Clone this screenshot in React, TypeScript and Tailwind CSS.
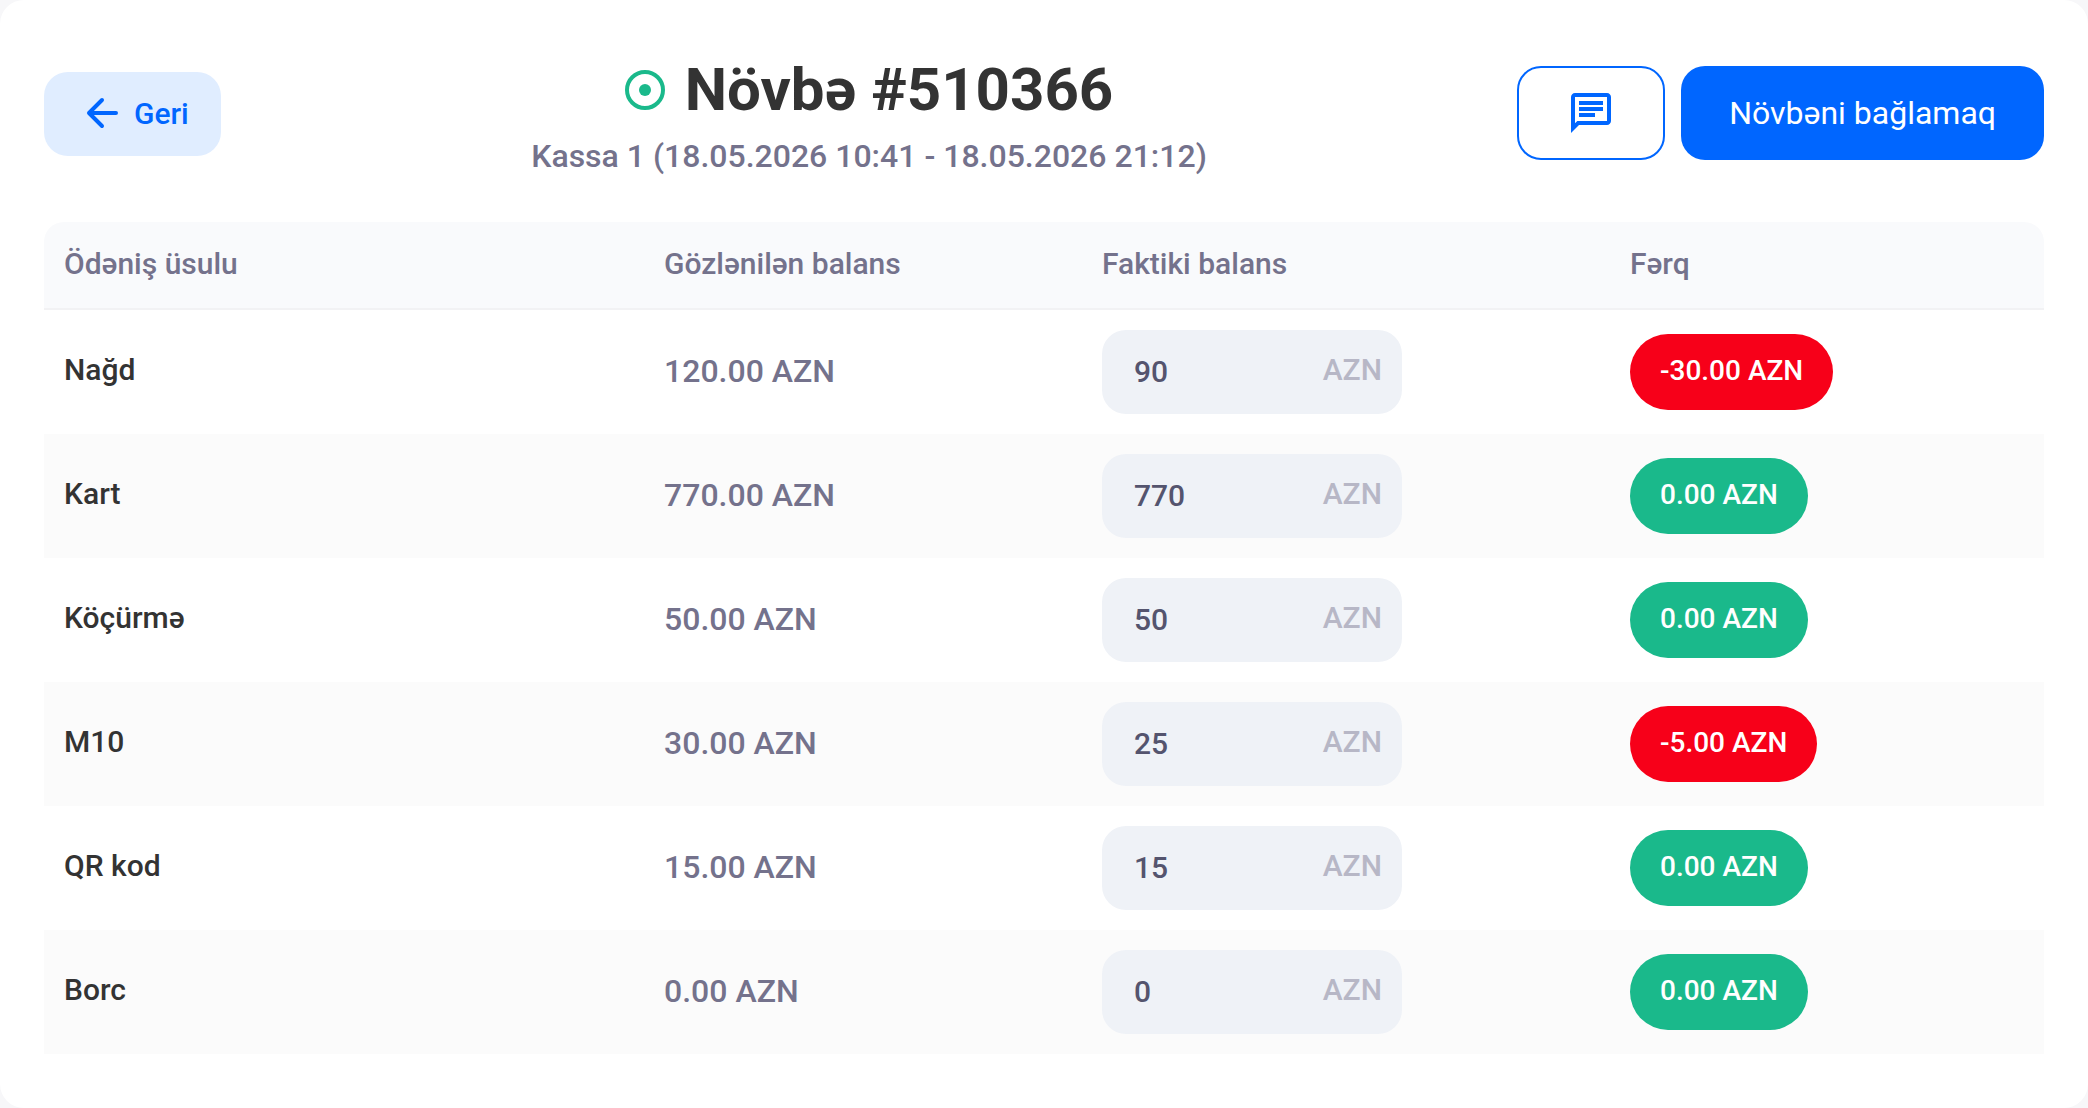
import { useState } from "react";
import { MdOutlineChat } from "react-icons/md";

interface Payment {
  id: string;
  name: string;
  expected: number;
  actual: string;
}

const initialPayments: Payment[] = [
  { id: "cash", name: "Nağd", expected: 120, actual: "90" },
  { id: "card", name: "Kart", expected: 770, actual: "770" },
  { id: "transfer", name: "Köçürmə", expected: 50, actual: "50" },
  { id: "m10", name: "M10", expected: 30, actual: "25" },
  { id: "qr", name: "QR kod", expected: 15, actual: "15" },
  { id: "debt", name: "Borc", expected: 0, actual: "0" },
];

function BackIcon() {
  return (
    <svg
      className="size-8"
      viewBox="0 0 32 32"
      fill="none"
      stroke="currentColor"
      strokeWidth="4"
      strokeLinecap="round"
      strokeLinejoin="round"
      aria-hidden="true"
    >
      <path d="M30 16H3M16 3L3 16l13 13" />
    </svg>
  );
}

function StatusIcon() {
  return (
    <svg className="size-10 text-[#1ab98b]" viewBox="0 0 40 40" aria-hidden="true">
      <circle cx="20" cy="20" r="18" fill="none" stroke="currentColor" strokeWidth="4" />
      <circle cx="20" cy="20" r="6" fill="currentColor" />
    </svg>
  );
}

function DiffBadge({ value }: { value: number }) {
  return (
    <span
      className={`inline-block align-middle rounded-full px-[30px] pt-4 pb-[18px] text-[28px] leading-[42px] text-white whitespace-nowrap ${
        value < 0 ? "bg-[#f70019]" : "bg-[#1ab98b]"
      }`}
    >
      {value.toFixed(2)} AZN
    </span>
  );
}

export default function App() {
  const [payments, setPayments] = useState<Payment[]>(initialPayments);

  const handleChange = (id: string, actual: string) => {
    setPayments(payments.map((p) => (p.id === id ? { ...p, actual } : p)));
  };

  return (
    <div className="min-h-screen flex bg-[#f7f7f9] font-['Roboto',sans-serif] font-medium">
      <main className="flex-1 bg-white rounded-3xl px-11 pt-13 pb-13">
        <header className="flex items-center justify-between">
          <button
            type="button"
            className="flex items-center gap-4 h-21 pl-[42px] pr-8 pb-0.5 rounded-3xl bg-[#e0edff] text-[#0066ff] text-[30px]"
          >
            <BackIcon />
            Geri
          </button>

          <div className="flex flex-col items-center gap-2">
            <h1 className="flex items-center gap-5 text-[60px] leading-[76px] font-bold text-[#333333]">
              <StatusIcon />
              Növbə #510366
            </h1>
            <p className="text-[32px] leading-10 text-[#74728c]">
              Kassa 1 (18.05.2026 10:41 - 18.05.2026 21:12)
            </p>
          </div>

          <div className="flex gap-4 pb-0.5">
            <button
              type="button"
              aria-label="Şərh"
              className="flex items-center justify-center w-37 h-[94px] rounded-3xl border-2 border-[#0066ff] text-[#0066ff]"
            >
              <MdOutlineChat className="size-12" />
            </button>
            <button
              type="button"
              className="h-[94px] px-12 rounded-3xl bg-[#0066ff] text-white text-[32px] font-normal"
            >
              Növbəni bağlamaq
            </button>
          </div>
        </header>

        <table className="w-full mt-[46px] table-fixed border-separate border-spacing-0 text-left">
          <thead>
            <tr className="text-[30px] leading-[44px] text-[#74728c] *:bg-[#f9fafc] *:border-b-2 *:border-[#f2f2f4] *:px-5 *:pt-5 *:pb-[22px] *:font-medium">
              <th className="w-[30%] rounded-tl-[20px]">Ödəniş üsulu</th>
              <th className="w-[21.9%]">Gözlənilən balans</th>
              <th className="w-[26.4%]">Faktiki balans</th>
              <th className="rounded-tr-[20px]">Fərq</th>
            </tr>
          </thead>
          <tbody>
            {payments.map((p) => (
              <tr key={p.id} className="h-31 even:bg-[#fbfbfb]">
                <td className="px-5 pb-1.5 text-[30px] text-[#333333]">
                  <label htmlFor={p.id}>{p.name}</label>
                </td>
                <td className="px-5 pb-0.5 text-[32px] text-[#74728c]">
                  {p.expected.toFixed(2)} AZN
                </td>
                <td className="px-5">
                  <div className="flex items-center w-75 h-21 px-5 rounded-3xl bg-[#eff2f7] text-[30px]">
                    <input
                      id={p.id}
                      value={p.actual}
                      onChange={(e) => handleChange(p.id, e.target.value)}
                      inputMode="decimal"
                      className="flex-1 min-w-0 px-3 pb-0.5 text-[#54546e] outline-none"
                    />
                    <span className="pb-1.5 text-[#b7b7c6]">AZN</span>
                  </div>
                </td>
                <td className="px-5">
                  <DiffBadge value={Number(p.actual) - p.expected} />
                </td>
              </tr>
            ))}
          </tbody>
        </table>
      </main>
    </div>
  );
}
